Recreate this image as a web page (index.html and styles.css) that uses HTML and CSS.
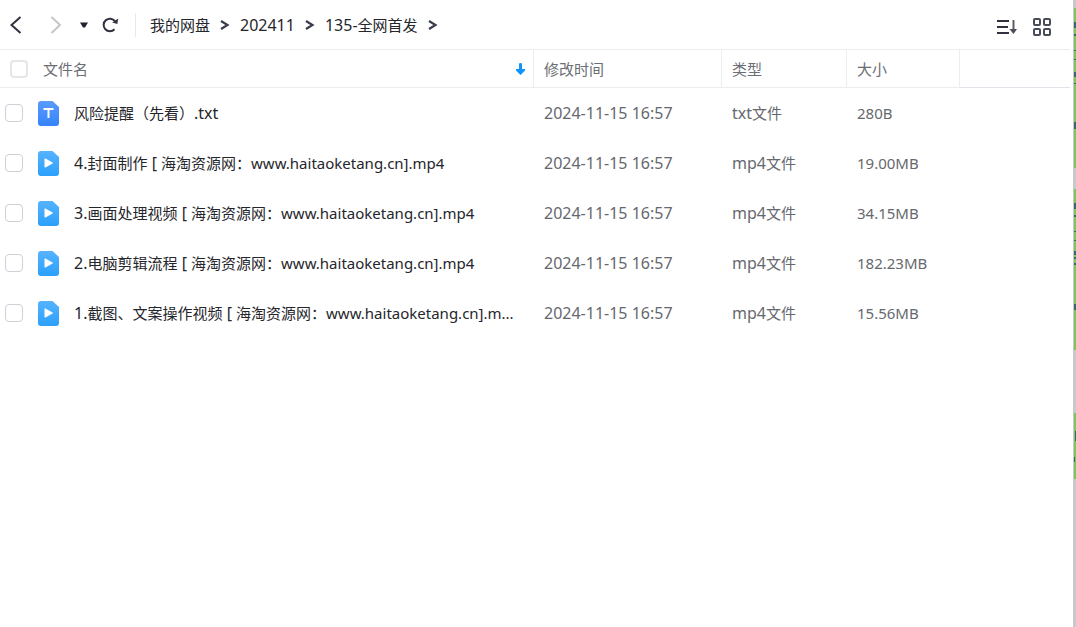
FILE: index.html
```html
<!DOCTYPE html>
<html lang="zh-CN">
<head>
<meta charset="utf-8">
<title>我的网盘</title>
<link rel="stylesheet" href="styles.css">
</head>
<body>
<svg class="defs" width="0" height="0" aria-hidden="true">
  <defs>
    <linearGradient id="video-fill" x1="0" y1="0" x2="0" y2="1"><stop offset="0" stop-color="#56b3ff"/><stop offset="1" stop-color="#2ba0fc"/></linearGradient>
    <linearGradient id="text-fill" x1="0" y1="0" x2="0" y2="1"><stop offset="0" stop-color="#5a9cff"/><stop offset="1" stop-color="#3482fb"/></linearGradient>
    <symbol id="video" viewBox="0 0 21 25"><path fill="url(#video-fill)" d="M3 0H14.500L21 6V22a3 3 0 0 1-3 3H3a3 3 0 0 1-3-3V3a3 3 0 0 1 3-3z"/><path fill="#fff" d="M6.500 8.200Q6.500 7.200 7.500 7.600L14.500 11.400Q15.300 12 14.500 12.600L7.500 16.400Q6.500 16.800 6.500 15.800z"/></symbol>
    <symbol id="text" viewBox="0 0 21 25"><path fill="url(#text-fill)" d="M3 0H14.500L21 6V22a3 3 0 0 1-3 3H3a3 3 0 0 1-3-3V3a3 3 0 0 1 3-3z"/><path fill="none" stroke="#fff" stroke-width="2" d="M5.500 8H15.500M10.500 8V17"/></symbol>
    <symbol id="sep" viewBox="0 0 10 12"><path fill="none" stroke="#3a3d4c" stroke-width="2.200" d="M1 2L7.500 6L1 10"/></symbol>
  </defs>
</svg>
<div class="app">
  <main class="browser">
    <header class="toolbar">
      <nav class="history" aria-label="导航">
        <button aria-label="后退"><svg width="12" height="18" viewBox="0 0 12 18"><path class="line" d="M10.500 1L1.500 9L10.500 17"/></svg></button>
        <button aria-label="前进" class="forward" disabled><svg width="12" height="18" viewBox="0 0 12 18"><path class="line faint" d="M1.500 1L10 9L1.500 17"/></svg></button>
        <button aria-label="历史"><svg width="8" height="6" viewBox="0 0 8 6"><path fill="#222530" d="M0 .5H8L5 5.500H3z"/></svg></button>
        <button aria-label="刷新"><svg width="17" height="16" viewBox="0 0 17 16"><path class="line" d="M12.500 12.300A6.300 6.300 0 1 1 13 4.200"/><path fill="#30333f" d="M16.300 1.500L15.300 7L10.200 5.400z"/></svg></button>
      </nav>
      <nav class="crumbs" aria-label="路径">
        <a href="#">我的网盘</a><svg width="10" height="12"><use href="#sep"/></svg>
        <a href="#"><span class="latin">202411</span></a><svg width="10" height="12"><use href="#sep"/></svg>
        <a href="#"><span class="latin">135-</span>全网首发</a><svg width="10" height="12"><use href="#sep"/></svg>
      </nav>
      <div class="tools">
        <button aria-label="排序"><svg width="20" height="16" viewBox="0 0 20 16"><path class="line" d="M0 2H12M0 8H11M0 14H12"/><path fill="none" stroke="#5c5f6a" stroke-width="2" d="M16.500 1V12"/><path fill="#4c4f5b" d="M12.500 10H20L16.500 15z"/></svg></button>
        <button aria-label="网格"><svg width="18" height="18" viewBox="0 0 18 18"><g fill="none" stroke="#484b58" stroke-width="2"><rect x="1" y="1" width="6" height="6" rx="1"/><rect x="11" y="1" width="6" height="6" rx="1"/><rect x="1" y="11" width="6" height="6" rx="1"/><rect x="11" y="11" width="6" height="6" rx="1"/></g></svg></button>
      </div>
    </header>
    <table class="files">
      <colgroup><col><col class="col-date"><col class="col-type"><col class="col-size"><col class="col-rest"></colgroup>
      <thead>
        <tr>
          <th><div class="name head"><input type="checkbox" aria-label="全选"><span class="title">文件名</span><svg width="9" height="12" viewBox="0 0 9 12"><path fill="#0e94fb" d="M3 1Q3 0 4.500 0T6 1V6H9V7.500L4.500 12L0 7.500V6H3z"/></svg></div></th>
          <th>修改时间</th><th>类型</th><th>大小</th><th></th>
        </tr>
      </thead>
      <tbody>
        <tr><td><div class="name"><input type="checkbox" id="f1"><svg width="21" height="25"><use href="#text"/></svg><label for="f1">风险提醒（先看）<span class="latin">.txt</span></label></div></td><td><span class="latin">2024-11-15 16:57</span></td><td><span class="latin">txt</span>文件</td><td>280B</td><td></td></tr>
        <tr><td><div class="name"><input type="checkbox" id="f2"><svg width="21" height="25"><use href="#video"/></svg><label for="f2"><span class="latin">4.</span>封面制作<span class="latin"> [ </span>海淘资源网：www.haitaoketang.cn].mp4</label></div></td><td><span class="latin">2024-11-15 16:57</span></td><td><span class="latin">mp4</span>文件</td><td>19.00MB</td><td></td></tr>
        <tr><td><div class="name"><input type="checkbox" id="f3"><svg width="21" height="25"><use href="#video"/></svg><label for="f3"><span class="latin">3.</span>画面处理视频<span class="latin"> [ </span>海淘资源网：www.haitaoketang.cn].mp4</label></div></td><td><span class="latin">2024-11-15 16:57</span></td><td><span class="latin">mp4</span>文件</td><td>34.15MB</td><td></td></tr>
        <tr><td><div class="name"><input type="checkbox" id="f4"><svg width="21" height="25"><use href="#video"/></svg><label for="f4"><span class="latin">2.</span>电脑剪辑流程<span class="latin"> [ </span>海淘资源网：www.haitaoketang.cn].mp4</label></div></td><td><span class="latin">2024-11-15 16:57</span></td><td><span class="latin">mp4</span>文件</td><td>182.23MB</td><td></td></tr>
        <tr><td><div class="name"><input type="checkbox" id="f5"><svg width="21" height="25"><use href="#video"/></svg><label for="f5"><span class="latin">1.</span>截图、文案操作视频<span class="latin"> [ </span>海淘资源网：www.haitaoketang.cn].m...</label></div></td><td><span class="latin">2024-11-15 16:57</span></td><td><span class="latin">mp4</span>文件</td><td>15.56MB</td><td></td></tr>
      </tbody>
    </table>
  </main>
  <aside class="edge" aria-hidden="true">
    <svg width="2" height="480">
      <path fill="#7cc75b" d="M0 8h2v160H0zM0 189h2v161H0zM0 413h2v66H0z"/>
      <path fill="#3d6671" d="M0 22h2v6H0zM0 34h2v2H0zM0 50h2v1H0zM0 59h2v1H0zM0 72h2v5H0zM0 83h2v1H0zM0 122h2v7H0zM0 203h2v6H0zM0 215h2v2H0zM0 231h2v1H0zM0 240h2v1H0zM0 251h2v4H0zM0 257h2v2H0zM0 263h2v2H0zM0 304h2v6H0zM1 431h1v10H1zM0 457h1v5H0z"/>
    </svg>
  </aside>
</div>
</body>
</html>
```
FILE: styles.css
```css
* {
  box-sizing: border-box;
}

body {
  margin: 0;
  background: #fff;
  color: #25262b;
  font: 15px/20px "Noto Sans", "Noto Sans CJK SC", sans-serif;
}

.defs {
  position: absolute;
}

.app {
  display: flex;
  min-height: 100vh;
}

.browser {
  flex: 1;
  min-width: 0;
  padding-right: 3px;
}

.edge {
  width: 3px;
  background: #c9c9c9;
  padding-left: 1px;
}

.edge svg {
  display: block;
}

.latin {
  font-size: 16px;
}

.toolbar {
  display: flex;
  align-items: center;
  height: 50px;
  padding: 0 19px 0 10px;
  border-bottom: 1px solid #ededf0;
}

button {
  display: flex;
  padding: 0;
  border: 0;
  background: none;
}

.line {
  fill: none;
  stroke: #30333f;
  stroke-width: 2;
}

.faint {
  stroke: #c6c6ca;
}

.history {
  display: flex;
  align-items: center;
  gap: 14px;
  height: 24px;
  padding-right: 16px;
  border-right: 1px solid #e8e8ea;
}

.forward {
  margin: 0 4px 0 14px;
}

.crumbs {
  display: flex;
  align-items: center;
  gap: 10px;
  padding-left: 14px;
}

.crumbs a {
  color: inherit;
  text-decoration: none;
}

.tools {
  display: flex;
  align-items: center;
  gap: 16px;
  margin-left: auto;
  padding-top: 4px;
}

.files {
  width: 100%;
  table-layout: fixed;
  border-collapse: separate;
  border-spacing: 0;
}

.col-date {
  width: 188px;
}

.col-type {
  width: 125px;
}

.col-size {
  width: 113px;
}

.col-rest {
  width: 110px;
}

th {
  height: 38px;
  padding: 0 10px;
  border-right: 1px solid #ededf0;
  border-bottom: 1px solid #ededf0;
  color: #6c6e75;
  font-weight: 400;
  text-align: left;
}

th:last-child {
  border-right: 0;
  border-bottom-color: #e2e2ea;
}

th:first-child,
td:first-child {
  padding: 0;
}

td {
  height: 50px;
  padding: 0 10px;
  color: #66686e;
  white-space: nowrap;
}

.name {
  display: flex;
  align-items: center;
  gap: 15px;
  padding: 0 10px 0 5px;
  color: #25262b;
}

.head {
  padding: 0 8px 0 10px;
  color: #6c6e75;
}

.title {
  flex: 1;
}

.name svg {
  flex: none;
}

.name label {
  flex: 1;
  min-width: 0;
  overflow: hidden;
  text-overflow: ellipsis;
}

input {
  appearance: none;
  flex: none;
  width: 18px;
  height: 18px;
  margin: 0;
  border: 1px solid #cdd1d8;
  border-radius: 4px;
  background: #fff;
}

.head input {
  border: 2px solid #e6e6e8;
}
```
